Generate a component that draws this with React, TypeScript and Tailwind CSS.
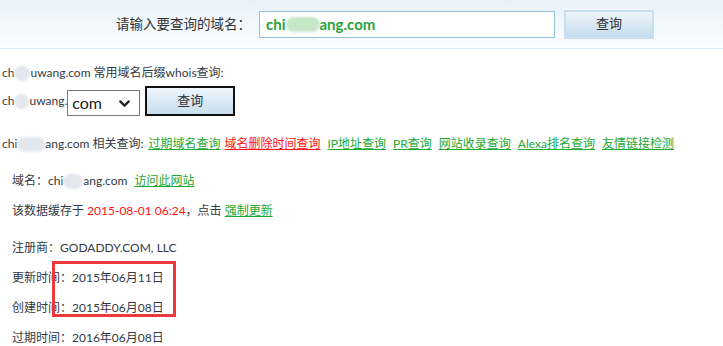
import { ChevronDown } from "lucide-react";

function Blur({ w, tone = "gray" }: { w: number; tone?: "gray" | "green" }) {
  return (
    <span
      className={
        "inline-block h-[15px] align-middle rounded-full blur-[1px] " +
        (tone === "green" ? "bg-[#c6e6c8]" : "bg-[#e4e7ee]")
      }
      style={{ width: w }}
    />
  );
}

function DataLine({ label, value, className = "" }: { label: string; value: string; className?: string }) {
  return (
    <div className={"h-[30px] leading-[30px] " + className}>
      {label}：{value}
    </div>
  );
}

export default function App() {
  return (
    <div
      className="relative w-[723px] h-[346px] overflow-hidden bg-white text-[12px] text-[#333a44]"
      style={{ fontFamily: 'Lato, "Noto Sans CJK SC", sans-serif' }}
    >
      <header className="flex h-[49px] items-center border-b border-[#dcebf6] bg-gradient-to-b from-[#e9f2fa] to-[#fbfdff] pl-[116px]">
        <span className="text-[13.5px] text-[#333]">请输入要查询的域名：</span>
        <div className="ml-[8px] flex h-[27px] w-[296px] items-center border border-[#93c4dd] bg-white px-[6px] text-[15px] font-bold text-[#2aa33a]">
          chi
          <Blur w={34} tone="green" />
          ang.com
        </div>
        <button className="ml-[9px] h-[29px] w-[90px] border-2 border-[#c9dff0] bg-gradient-to-b from-[#eef5fb] to-[#c6dced] text-[13px] text-[#333]">
          查询
        </button>
      </header>

      <section className="pl-[2px]">
        <div className="mt-[15px] h-[18px] leading-[18px]">
          ch<Blur w={16} />uwang.com 常用域名后缀whois查询:
        </div>
        <div className="mt-[4px] flex items-center">
          <span>
            ch<Blur w={15} />uwang.
          </span>
          <div className="mt-[4px] flex h-[26px] w-[73px] items-center justify-between border border-[#7a7a7a] pl-[4px] pr-[6px] text-[16px] text-[#222]">
            com
            <ChevronDown size={17} strokeWidth={3.2} className="text-[#222]" />
          </div>
          <button className="ml-[5px] h-[30px] w-[90px] border-2 border-[#111] bg-gradient-to-b from-[#eef5fb] to-[#c7deef] text-[13px] text-[#333]">
            查询
          </button>
        </div>
        <div className="mt-[19px] flex h-[18px] items-center gap-[7px] leading-[18px]">
          <span>
            chi<Blur w={28} />ang.com 相关查询:
          </span>
          <a className="-ml-[2px] text-[#22a832] underline">过期域名查询</a>
          <a className="-ml-[3px] text-[#ff1111] underline">域名删除时间查询</a>
          <a className="text-[#22a832] underline">IP地址查询</a>
          <a className="text-[#22a832] underline">PR查询</a>
          <a className="text-[#22a832] underline">网站收录查询</a>
          <a className="text-[#22a832] underline">Alexa排名查询</a>
          <a className="text-[#22a832] underline">友情链接检测</a>
        </div>
      </section>

      <section className="mt-[13px] pl-[12px]">
        <div className="h-[30px] leading-[30px]">
          域名：chi<Blur w={20} />ang.com <a className="ml-[4px] text-[#22a832] underline">访问此网站</a>
        </div>
        <div className="h-[30px] leading-[30px]">
          该数据缓存于 <span className="text-[#ff1111]">2015-08-01 06:24</span>，点击{" "}
          <a className="text-[#22a832] underline">强制更新</a>
        </div>
        <DataLine className="mt-[7px]" label="注册商" value="GODADDY.COM, LLC" />
        <DataLine label="更新时间" value="2015年06月11日" />
        <DataLine label="创建时间" value="2015年06月08日" />
        <DataLine label="过期时间" value="2016年06月08日" />
      </section>

      <div className="absolute left-[52px] top-[261px] h-[56px] w-[124px] border-[3px] border-[#ec3a3c]" />
    </div>
  );
}
